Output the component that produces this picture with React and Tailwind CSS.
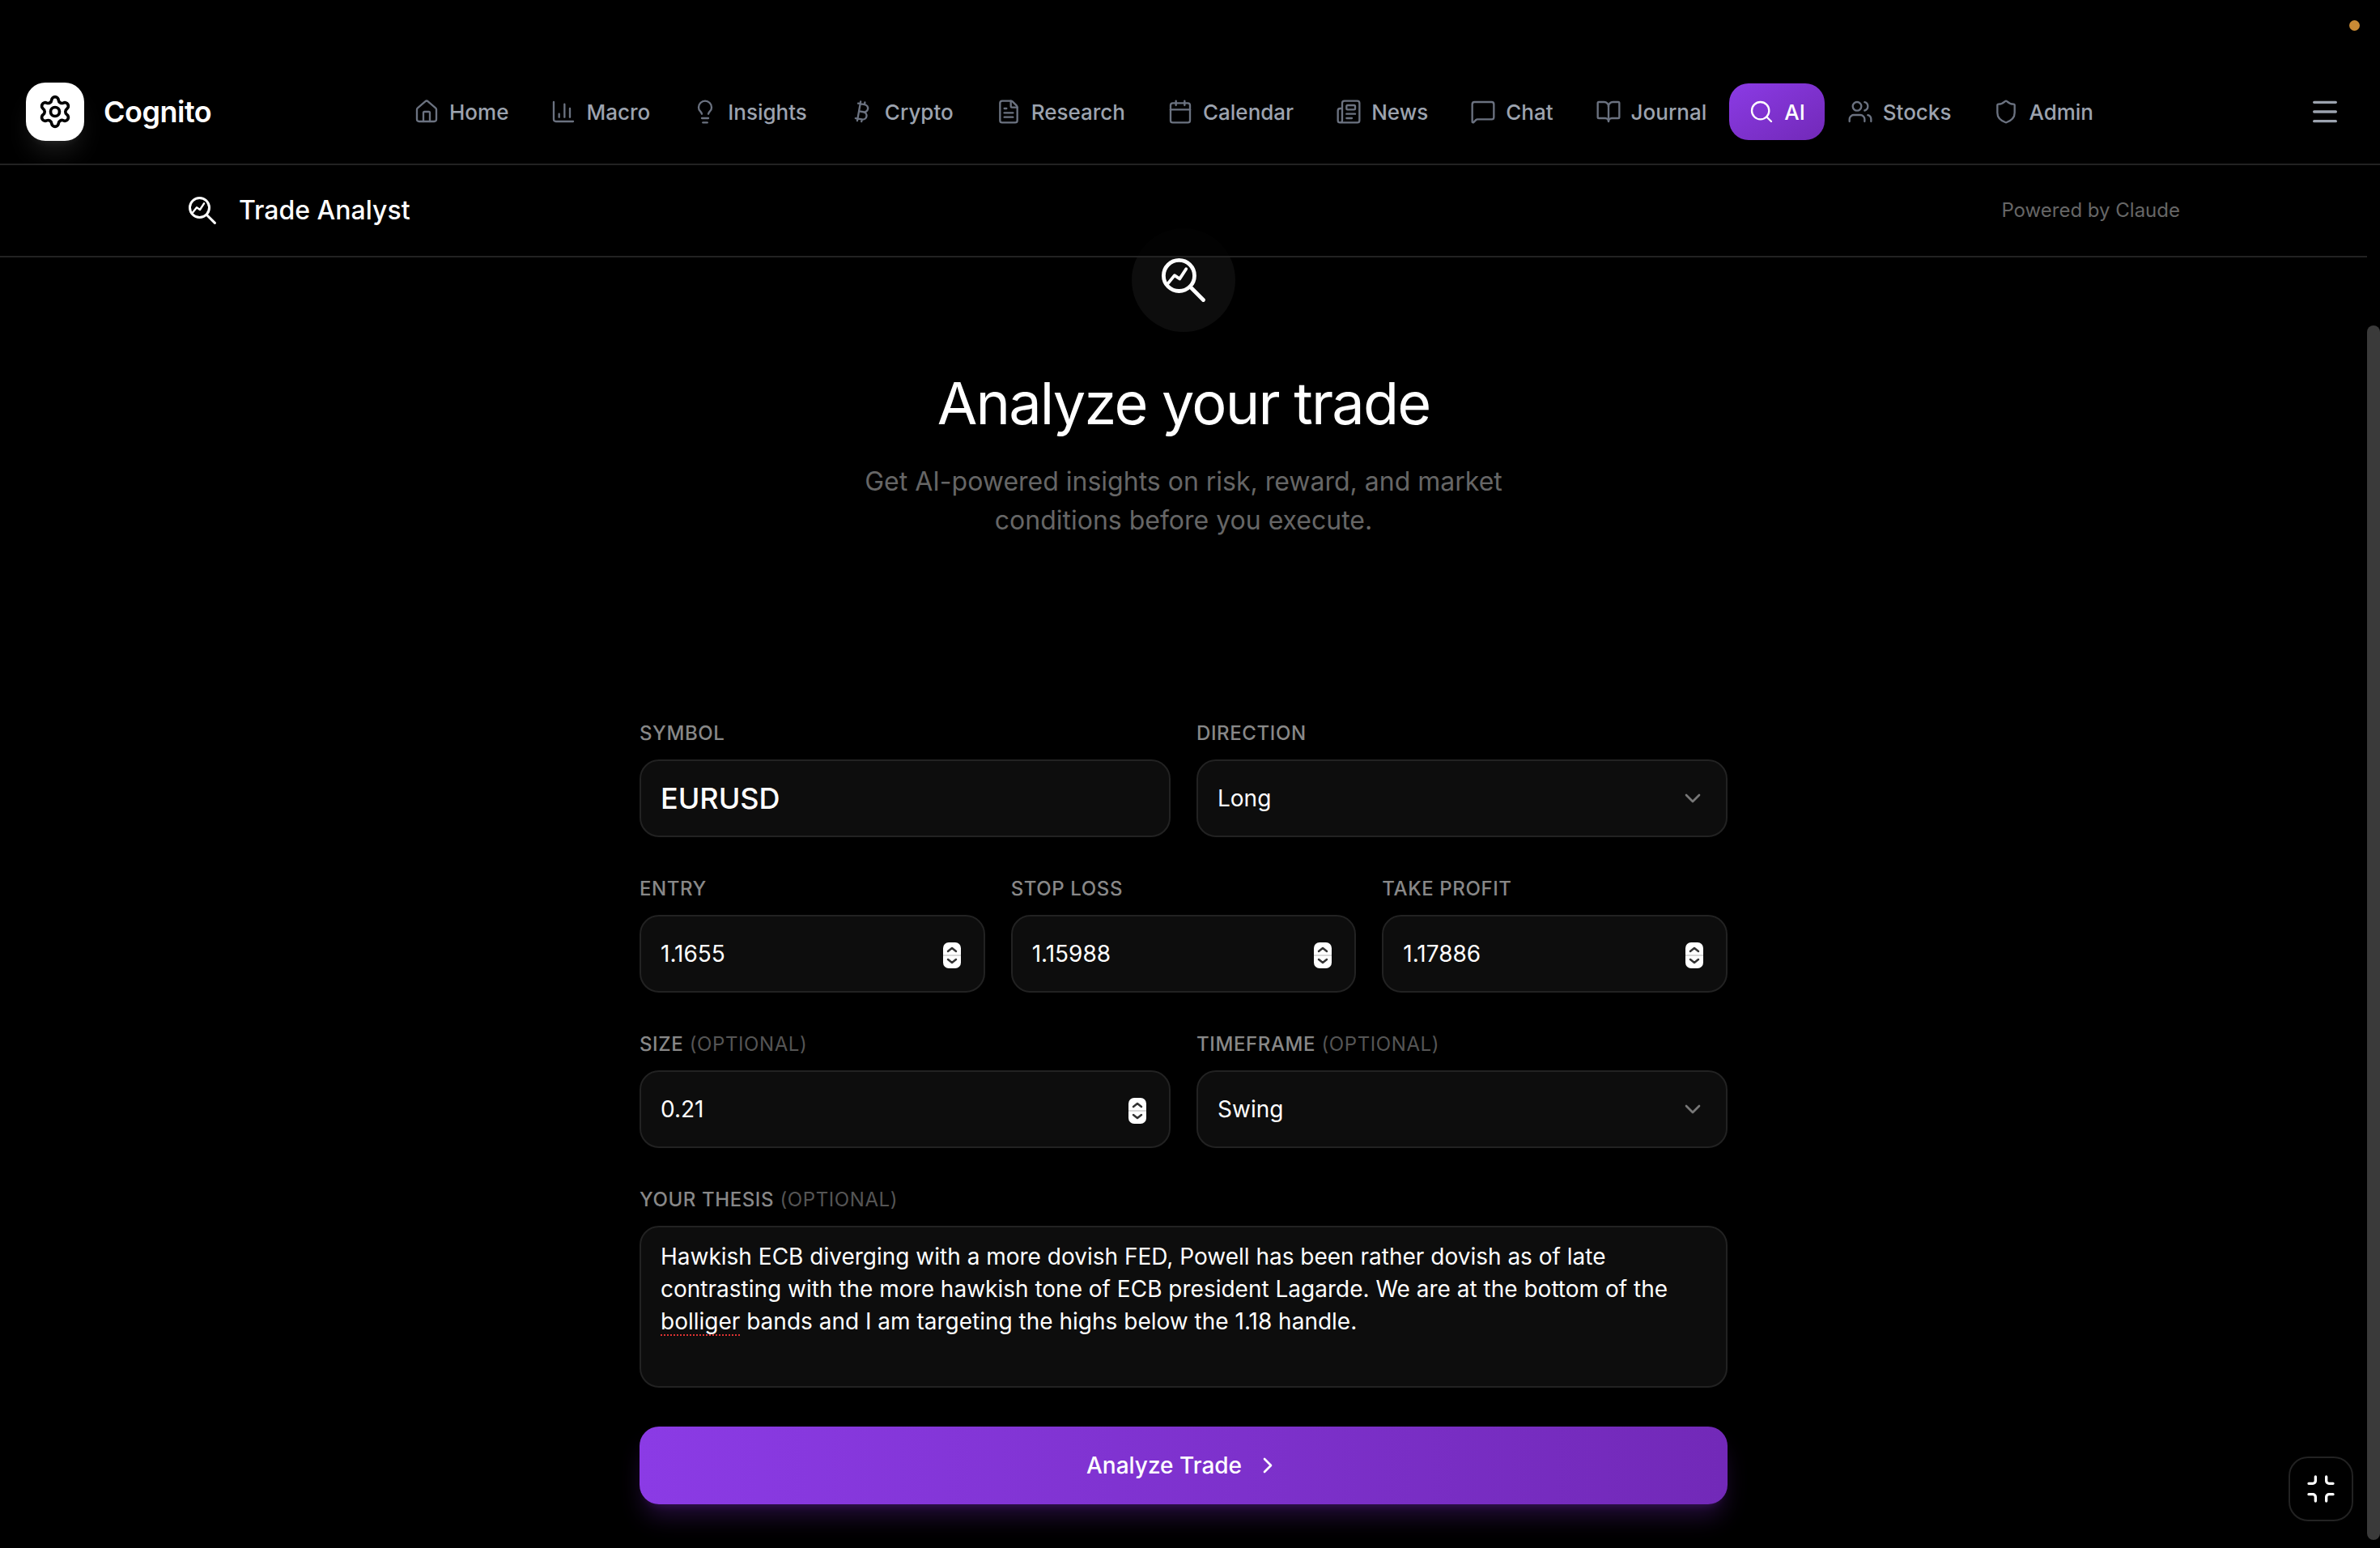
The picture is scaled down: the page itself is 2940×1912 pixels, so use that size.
import React from 'react';
import {
  House, ChartColumn, Lightbulb, Bitcoin, FileText, Calendar, Newspaper, MessageSquare,
  BookOpen, Search, Users, Shield, Menu, Settings, ChevronDown, ChevronRight, Minimize
} from 'lucide-react';

const navItems = [
  { icon: House, label: 'Home' },
  { icon: ChartColumn, label: 'Macro' },
  { icon: Lightbulb, label: 'Insights' },
  { icon: Bitcoin, label: 'Crypto' },
  { icon: FileText, label: 'Research' },
  { icon: Calendar, label: 'Calendar' },
  { icon: Newspaper, label: 'News' },
  { icon: MessageSquare, label: 'Chat' },
  { icon: BookOpen, label: 'Journal' },
  { icon: Search, label: 'AI', active: true },
  { icon: Users, label: 'Stocks' },
  { icon: Shield, label: 'Admin' }
];

const SearchTrend = ({ size, className }) => (
  <svg width={size} height={size} viewBox="0 0 34 34" fill="none" stroke="currentColor" strokeWidth="3" strokeLinecap="round" strokeLinejoin="round" className={className}>
    <circle cx="13.5" cy="13.5" r="12" />
    <path d="M22.2 22.2 32.4 32.4" />
    <path d="M4 20.7 10 13.3l4 2.7 5-7.7" strokeWidth="2.4" />
  </svg>
);

const Spinner = () => (
  <svg width="22" height="32" viewBox="0 0 22 32" fill="none" className="shrink-0 mt-1">
    <rect width="22" height="32" rx="7" fill="#fff" />
    <rect y="15" width="22" height="2" fill="#d9d9d9" />
    <path d="M6 11l5-4 5 4" stroke="#333" strokeWidth="2.5" strokeLinecap="round" strokeLinejoin="round" />
    <path d="M6 21l5 4 5-4" stroke="#333" strokeWidth="2.5" strokeLinecap="round" strokeLinejoin="round" />
  </svg>
);

const Field = ({ label, optional, children }) => (
  <div className="flex flex-col gap-4 min-w-0">
    <div className="h-8 text-[24px] leading-8 font-medium uppercase tracking-[0.6px] text-[#888]">
      {label}
      {optional && <span className="font-normal text-[#555]"> (Optional)</span>}
    </div>
    {children}
  </div>
);

const box = 'h-24 flex items-center justify-between pl-[24px] pr-[28px] bg-[#0d0d0d] border-2 border-[#222] rounded-3xl text-white text-[28px]';

const NumberInput = ({ value }) => (
  <div className={box}>
    <span>{value}</span>
    <Spinner />
  </div>
);

const SelectInput = ({ value }) => (
  <div className={box}>
    <span>{value}</span>
    <ChevronDown size={32} strokeWidth={2} className="text-[#777] -mr-[3px]" />
  </div>
);

export default function App() {
  return (
    <div className="relative h-screen overflow-hidden bg-black flex flex-col font-['Inter',sans-serif]">
      {/* status dot */}
      <div className="absolute top-[25px] right-[25px] w-[13px] h-[13px] rounded-full bg-[#c98a35]" />

      {/* Top nav */}
      <header className="h-[204px] shrink-0 pt-[74px] border-b-2 border-[#222] flex items-center">
        <div className="flex items-center h-full w-full pl-8 pr-12">
          <div className="flex items-center gap-6 w-[228px] shrink-0">
            <div className="w-[72px] h-[72px] shrink-0 rounded-3xl bg-white flex items-center justify-center shadow-[0_20px_30px_-6px_rgba(255,255,255,0.1),0_8px_12px_-8px_rgba(255,255,255,0.1)]">
              <Settings size={44} strokeWidth={2} className="text-black" />
            </div>
            <span className="text-[36px] font-semibold text-white tracking-[-0.5px]">Cognito</span>
          </div>

          <nav className="flex items-center gap-1 ml-[227px]">
            {navItems.map((item) => {
              const Icon = item.icon;
              return (
                <div key={item.label}
                  className={`h-[70px] px-6 flex items-center gap-3 rounded-3xl text-[26px] font-medium ${item.active ? 'bg-gradient-to-br from-[#8b3be5] to-[#7229b8] text-white' : 'text-[#9ca3af]'}`}>
                  <Icon size={32} strokeWidth={1.75} className={item.active ? 'text-white' : 'text-[#6b7280]'} />
                  <span>{item.label}</span>
                </div>
              );
            })}
          </nav>

          <Menu size={40} strokeWidth={2} className="ml-auto text-[#9ca3af]" />
        </div>
      </header>

      <div className="flex-1 min-h-0 flex">
        <div className="flex-1 min-w-0 flex flex-col">
          {/* Sub header */}
          <div className="relative z-10 h-[114px] shrink-0 bg-black/80 border-b-2 border-[#222] flex items-center justify-between pl-[233px] pr-[231px]">
            <div className="flex items-center gap-7 text-white">
              <SearchTrend size={34} />
              <span className="text-[32px] font-medium">Trade Analyst</span>
            </div>
            <span className="text-[24px] text-[#666]">Powered by Claude</span>
          </div>

          {/* Scrolled content */}
          <main className="-mt-[36px] flex flex-col items-center">
            <div className="w-32 h-32 rounded-full bg-[#0d0d0d] flex items-center justify-center text-white">
              <SearchTrend size={54} />
            </div>
            <h1 className="mt-[40px] text-[72px] leading-[96px] tracking-tight text-white">Analyze your trade</h1>
            <p className="mt-[25px] w-[840px] text-center text-[32px] leading-[48px] text-[#666]">
              Get AI-powered insights on risk, reward, and market conditions before you execute.
            </p>

            <div className="mt-[223px] w-[1344px] flex flex-col gap-12">
              <div className="grid grid-cols-2 gap-8">
                <Field label="Symbol">
                  <div className={box}><span className="text-[36px] font-medium">EURUSD</span></div>
                </Field>
                <Field label="Direction"><SelectInput value="Long" /></Field>
              </div>

              <div className="grid grid-cols-3 gap-8">
                <Field label="Entry"><NumberInput value="1.1655" /></Field>
                <Field label="Stop Loss"><NumberInput value="1.15988" /></Field>
                <Field label="Take Profit"><NumberInput value="1.17886" /></Field>
              </div>

              <div className="grid grid-cols-2 gap-8">
                <Field label="Size" optional><NumberInput value="0.21" /></Field>
                <Field label="Timeframe" optional><SelectInput value="Swing" /></Field>
              </div>

              <Field label="Your Thesis" optional>
                <div className="h-[200px] px-6 py-[16px] bg-[#0d0d0d] border-2 border-[#222] rounded-3xl text-white text-[28px] leading-10">
                  Hawkish ECB diverging with a more dovish FED, Powell has been rather dovish as of late contrasting with the more hawkish tone of ECB president Lagarde. We are at the bottom of the{' '}
                  <span className="underline decoration-dotted decoration-2 decoration-[#dd3333] underline-offset-[6px]">bolliger</span>{' '}
                  bands and I am targeting the highs below the 1.18 handle.
                </div>
              </Field>

              <button className="h-24 flex items-center justify-center gap-4 rounded-3xl bg-gradient-to-r from-[#8b3be5] to-[#7229b8] text-white text-[28px] font-medium shadow-[0_20px_30px_-6px_rgba(147,51,234,0.25),0_8px_12px_-8px_rgba(147,51,234,0.25)]">
                Analyze Trade
                <ChevronRight size={32} strokeWidth={2} />
              </button>
            </div>
          </main>
        </div>

        {/* Scrollbar */}
        <div className="w-4 shrink-0 pt-[198px] pb-[10px]">
          <div className="h-full rounded-full bg-[#3a3a3a]" />
        </div>
      </div>

      {/* Fullscreen toggle */}
      <div className="absolute right-[33px] bottom-[33px] w-20 h-20 rounded-3xl bg-black border-2 border-[#222] flex items-center justify-center text-white">
        <Minimize size={40} strokeWidth={2} />
      </div>
    </div>
  );
}
